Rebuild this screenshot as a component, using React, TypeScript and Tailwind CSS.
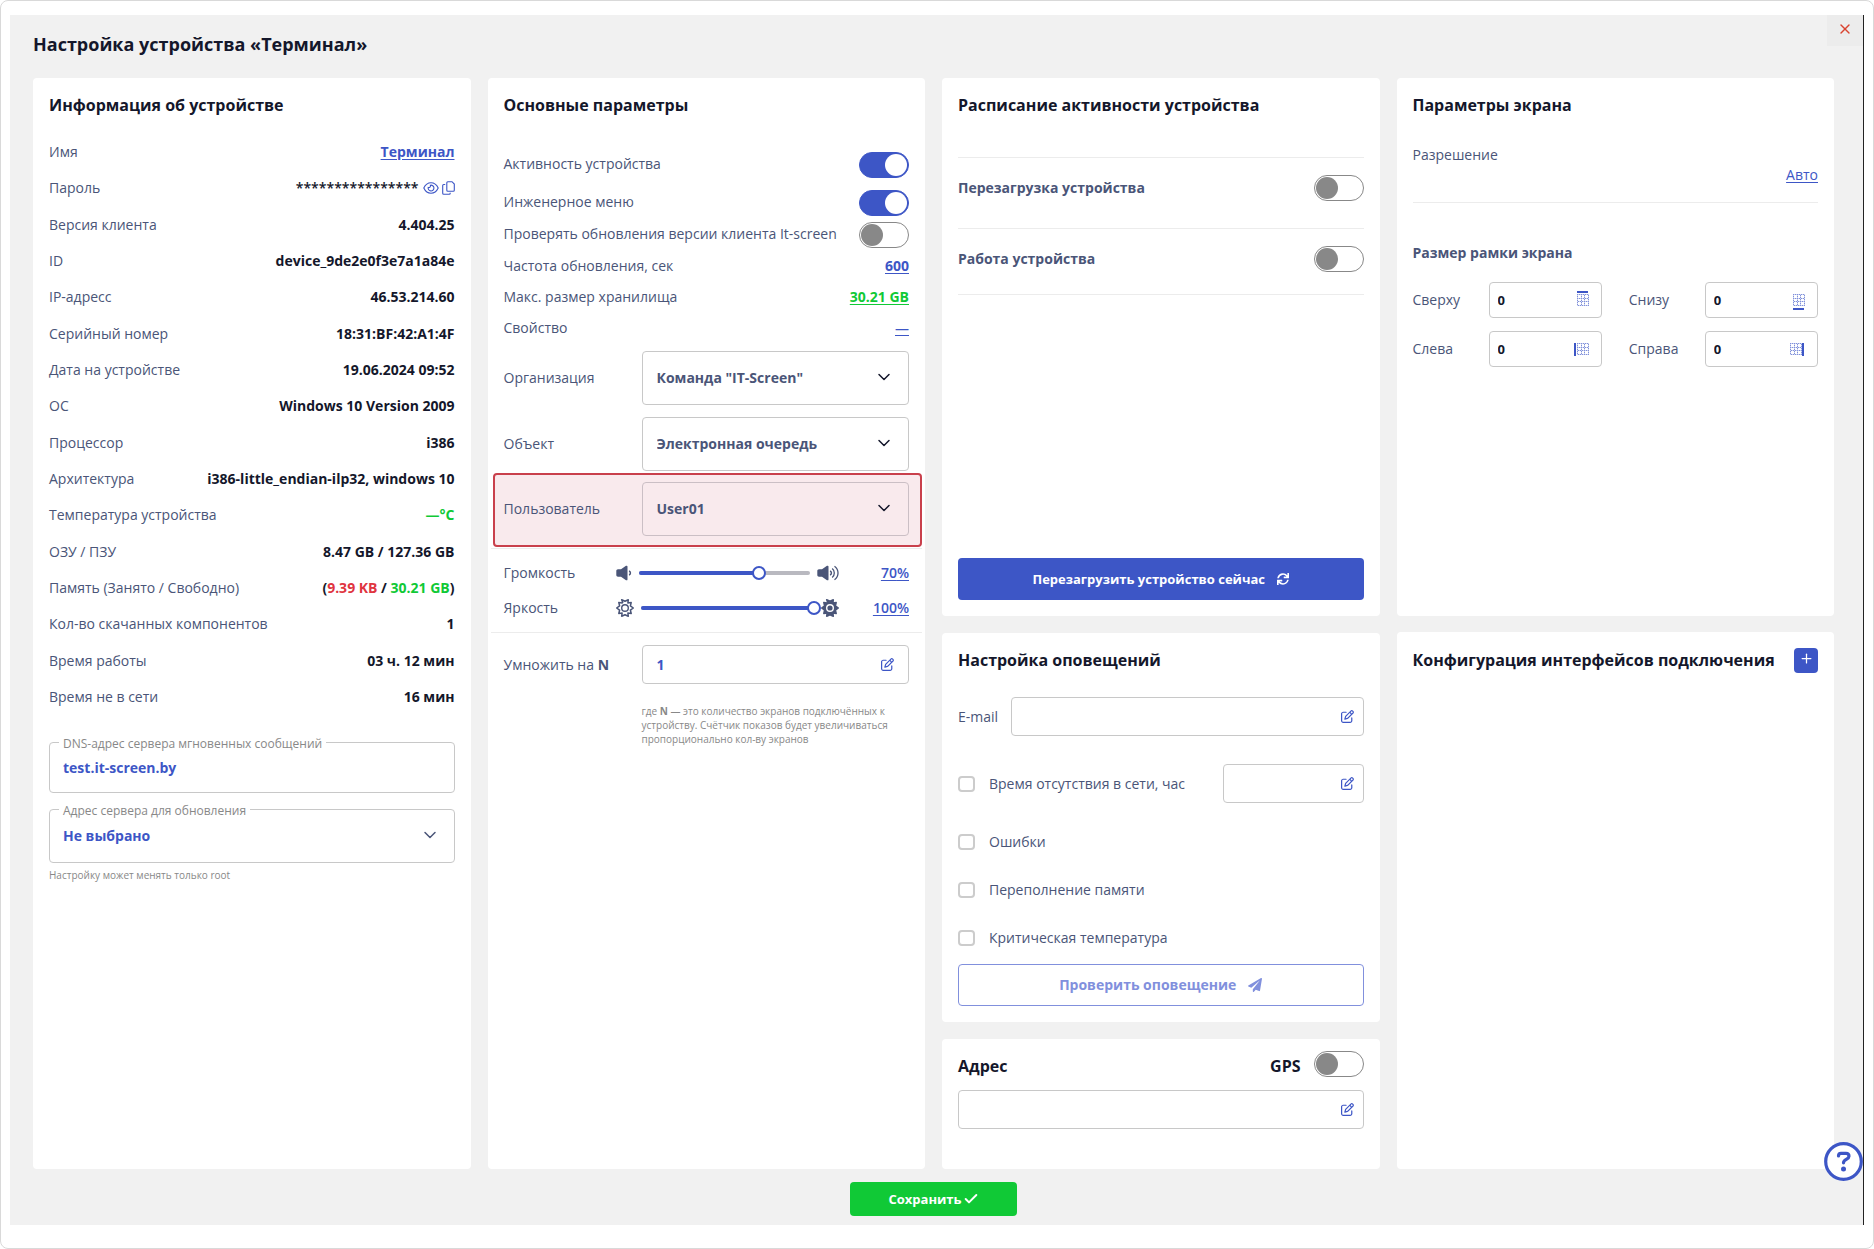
import { useState } from 'react';
import type { ReactNode } from 'react';
import { FaSync, FaPaperPlane } from 'react-icons/fa';
import { FaRegPenToSquare } from 'react-icons/fa6';
import { Check, ChevronDown, Plus, X } from 'lucide-react';

interface InfoRow {
  label: string;
  value: ReactNode;
}

const link = 'text-[#3d56c6] underline underline-offset-2';

function EyeIcon() {
  return (
    <svg width="16" height="14" viewBox="0 0 16 14" fill="none" stroke="currentColor" strokeWidth="1.1">
      <path d="M.8 7C2.3 3.8 4.9 1.8 8 1.8S13.700 3.800 15.200 7C13.700 10.200 11.100 12.200 8 12.200S2.300 10.200.8 7Z" />
      <path d="M7.400 4.200A2.900 2.900 0 1 1 5.200 6.400C6.600 6.900 7.900 5.700 7.400 4.200Z" />
    </svg>
  );
}

function CopyIcon() {
  return (
    <svg width="13" height="14" viewBox="0 0 13 14" fill="none" stroke="currentColor" strokeWidth="1.1">
      <path d="M5.800.7H10L12.300 3V9.200A1 1 0 0 1 11.300 10.200H5.800A1 1 0 0 1 4.800 9.200V1.700A1 1 0 0 1 5.800.7Z" />
      <path d="M3.200 3.500H1.700A1 1 0 0 0 .7 4.500V12.200A1 1 0 0 0 1.700 13.200H7.200A1 1 0 0 0 8.200 12.200V11.800" />
    </svg>
  );
}

function VolumeIcon({ loud }: { loud?: boolean }) {
  return (
    <svg width={loud ? 22 : 16} height="16" viewBox={loud ? '0 0 22 16' : '0 0 16 16'} fill="none" stroke="#4a5578">
      <path d="M2 4.300H5L10 .8C10.800.4 11.500.7 11.500 1.600V14.400C11.500 15.300 10.800 15.600 10 15.200L5 11.700H2C1 11.700.3 11 .3 10V6C.3 5 1 4.300 2 4.300Z" fill="#4a5578" stroke="none" />
      <path d="M13 6C14.900 6.400 14.900 9.600 13 10" strokeWidth="1.500" />
      {loud && (
        <>
          <path d="M15.200 3.500C18 5.700 18 10.300 15.200 12.500" strokeWidth="1.300" />
          <path d="M17.500 1.200C22.200 4.800 22.200 11.200 17.500 14.800" strokeWidth="1.300" />
        </>
      )}
    </svg>
  );
}

function BrightnessIcon({ filled }: { filled?: boolean }) {
  return (
    <svg width="18" height="18" viewBox="0 0 18 18" stroke="#4a5578" strokeLinejoin="round">
      <path
        d="M6.700 3.400 5.700.8 9 2.300 12.300.8 11.900 3.900 15.200 3.600 14.400 6.800 17.300 9 14.400 11.200 15.200 14.400 11.900 14.100 12.300 17.200 9 15.700 5.700 17.200 6.100 14.100 2.800 14.400 3.600 11.200.7 9 3.600 6.800 2.800 3.600 6.100 3.900Z"
        fill={filled ? '#4a5578' : 'none'}
        strokeWidth="1.500"
      />
      <circle cx="9" cy="9" r="3.300" fill={filled ? '#4a5578' : 'none'} stroke={filled ? '#fff' : '#4a5578'} strokeWidth="1.400" />
    </svg>
  );
}

// dotted grid, three cells in each direction
const dots = [0, 1, 2, 3, 4, 5, 6, 7, 8, 9, 10, 11];
const lines = [0, 4, 7, 11];

function FrameIcon({ side }: { side: 'top' | 'bottom' | 'left' | 'right' }) {
  const left = side === 'right' ? 0 : 3;

  return (
    <svg width="18" height="20" viewBox="0 0 18 20" fill="#3d56c6" shapeRendering="crispEdges">
      {dots.map((a) =>
        dots.map((b) => {
          if (!lines.includes(a) && !lines.includes(b)) return null;
          return (
            <rect key={`${a}-${b}`} x={left + a} y={4 + b} width="1" height="1" opacity={(a + b) % 2 === 0 ? 0.65 : 0.25} />
          );
        })
      )}
      {side === 'top' && <rect x="3" y="1" width="11" height="2" />}
      {side === 'bottom' && <rect x="3" y="18" width="11" height="2" />}
      {side === 'left' && <rect x="0" y="4" width="2" height="13" />}
      {side === 'right' && <rect x="12" y="4" width="2" height="13" />}
    </svg>
  );
}

function Card({ className = '', children }: { className?: string; children: ReactNode }) {
  return <section className={`flex flex-col rounded bg-white p-4 ${className}`}>{children}</section>;
}

function Title({ children }: { children: ReactNode }) {
  return <h2 className="text-base leading-[22px] font-bold text-[#14172b]">{children}</h2>;
}

function Toggle({ id, label, on = false }: { id?: string; label?: string; on?: boolean }) {
  return (
    <input
      id={id}
      type="checkbox"
      role="switch"
      aria-label={label}
      defaultChecked={on}
      className="flex h-[26px] w-[50px] shrink-0 appearance-none items-center rounded-full border border-[#888] px-px before:size-[22px] before:rounded-full before:bg-[#888] checked:justify-end checked:border-[#3d56c6] checked:bg-[#3d56c6] checked:before:bg-white"
    />
  );
}

function EditField({ id, label, value = '', className = 'flex-1 pr-[9px]' }: { id: string; label?: string; value?: string; className?: string }) {
  return (
    <div className={`flex h-[39px] items-center rounded border border-[#c8c8c8] ${className}`}>
      <input
        id={id}
        aria-label={label}
        defaultValue={value}
        className="h-full w-full min-w-0 bg-transparent pl-[14px] font-bold text-[#3d56c6] outline-none"
      />
      <button aria-label="Редактировать" className="shrink-0 text-[#3d56c6]">
        <FaRegPenToSquare size={13} />
      </button>
    </div>
  );
}

function SelectRow({ id, label, value, border = 'border-[#c8c8c8]' }: { id: string; label: string; value: string; border?: string }) {
  return (
    <div className="flex items-center">
      <label htmlFor={id} className="w-[138px] shrink-0">{label}</label>
      <div className="relative flex-1">
        <select id={id} className={`h-[54px] w-full appearance-none rounded border bg-transparent px-[14px] font-bold ${border}`}>
          <option>{value}</option>
        </select>
        <ChevronDown size={20} strokeWidth={1.8} className="pointer-events-none absolute top-4 right-[15px] text-[#14172b]" />
      </div>
    </div>
  );
}

function Slider({ id, label, initial, low, high }: { id: string; label: string; initial: number; low: ReactNode; high: ReactNode }) {
  const [value, setValue] = useState(initial);

  return (
    <div className="flex h-[35px] items-center">
      <label htmlFor={id} className="w-28 shrink-0">{label}</label>
      {low}
      <div className="relative mx-[7px] h-1 flex-1 rounded-full bg-[#b9b9c0]">
        <div className="h-1 rounded-full bg-[#3d56c6]" style={{ width: `${value}%` }} />
        <input
          id={id}
          type="range"
          value={value}
          onChange={(e) => setValue(Number(e.target.value))}
          className="absolute -inset-x-[7px] -top-[5px] h-[14px] appearance-none bg-transparent [&::-webkit-slider-thumb]:size-[14px] [&::-webkit-slider-thumb]:appearance-none [&::-webkit-slider-thumb]:rounded-full [&::-webkit-slider-thumb]:border-2 [&::-webkit-slider-thumb]:border-[#3d56c6] [&::-webkit-slider-thumb]:bg-white"
        />
      </div>
      {high}
      <a href="#" className={`w-[70px] text-right font-semibold ${link}`}>{value}%</a>
    </div>
  );
}

const info: InfoRow[] = [
  { label: 'Имя', value: <a href="#" className={link}>Терминал</a> },
  {
    label: 'Пароль',
    value: (
      <span className="flex items-center font-semibold">
        ****************
        <button aria-label="Показать пароль" className="ml-1 text-[#3d56c6]"><EyeIcon /></button>
        <button aria-label="Скопировать пароль" className="ml-[3px] text-[#3d56c6]"><CopyIcon /></button>
      </span>
    ),
  },
  { label: 'Версия клиента', value: '4.404.25' },
  { label: 'ID', value: 'device_9de2e0f3e7a1a84e' },
  { label: 'IP-адресс', value: '46.53.214.60' },
  { label: 'Серийный номер', value: '18:31:BF:42:A1:4F' },
  { label: 'Дата на устройстве', value: '19.06.2024 09:52' },
  { label: 'ОС', value: 'Windows 10 Version 2009' },
  { label: 'Процессор', value: 'i386' },
  { label: 'Архитектура', value: 'i386-little_endian-ilp32, windows 10' },
  { label: 'Температура устройства', value: <span className="text-[#10c936]">—°C</span> },
  { label: 'ОЗУ / ПЗУ', value: '8.47 GB / 127.36 GB' },
  {
    label: 'Память (Занято / Свободно)',
    value: (
      <>
        (<span className="text-[#e0353f]">9.39 KB</span> / <span className="text-[#10c936]">30.21 GB</span>)
      </>
    ),
  },
  { label: 'Кол-во скачанных компонентов', value: '1' },
  { label: 'Время работы', value: '03 ч. 12 мин' },
  { label: 'Время не в сети', value: '16 мин' },
];

const frame = [
  { id: 'top', label: 'Сверху', side: 'top' as const },
  { id: 'bottom', label: 'Снизу', side: 'bottom' as const },
  { id: 'left', label: 'Слева', side: 'left' as const },
  { id: 'right', label: 'Справа', side: 'right' as const },
];

export default function App() {
  return (
    <div className="flex min-h-screen flex-col rounded-lg border border-[#d9d9d9] bg-white pt-[14px] pr-[9px] pb-[23px] pl-[9px] font-['Open_Sans',sans-serif] text-sm text-[#4a5578]">
      <div className="relative flex flex-1 flex-col border-r border-[#222] bg-[#f1f1f1] pr-[29px] pl-[23px]">
        <h1 className="mt-[17px] mb-[22px] text-lg leading-6 font-bold text-[#14172b]">Настройка устройства «Терминал»</h1>
        <button aria-label="Закрыть" className="absolute top-0 right-0 flex h-[31px] w-9 items-center justify-center bg-[#ececec] pb-1 text-[#d9432f]">
          <X size={16} strokeWidth={2} />
        </button>

        <main className="grid flex-1 grid-cols-4 gap-[17px]">
          {/* Информация */}
          <Card>
            <Title>Информация об устройстве</Title>
            <dl className="mt-[18px] grid h-[581px] auto-rows-fr">
              {info.map((row) => (
                <div key={row.label} className="flex items-center justify-between">
                  <dt>{row.label}</dt>
                  <dd className="font-bold text-[#14172b]">{row.value}</dd>
                </div>
              ))}
            </dl>
            <div className="relative mt-[27px]">
              <label htmlFor="dns" className="absolute -top-2 left-[10px] bg-white px-1 text-xs leading-5 text-[#888]">
                DNS-адрес сервера мгновенных сообщений
              </label>
              <input id="dns" defaultValue="test.it-screen.by" className="h-[51px] w-full rounded border border-[#c8c8c8] px-[13px] font-bold text-[#3d56c6]" />
            </div>
            <div className="relative mt-4">
              <label htmlFor="update" className="absolute -top-2 left-[10px] z-10 bg-white px-1 text-xs leading-5 text-[#888]">
                Адрес сервера для обновления
              </label>
              <select id="update" className="h-[54px] w-full appearance-none rounded border border-[#c8c8c8] px-[13px] font-bold text-[#3d56c6]">
                <option>Не выбрано</option>
              </select>
              <ChevronDown size={20} strokeWidth={1.8} className="pointer-events-none absolute top-4 right-[15px]" />
            </div>
            <p className="mt-1 text-[10px] leading-4 text-[#888]">Настройку может менять только root</p>
          </Card>

          {/* Основные параметры */}
          <Card>
            <Title>Основные параметры</Title>
            <div className="mt-9 flex items-start justify-between">
              <label htmlFor="active" className="leading-6">Активность устройства</label>
              <Toggle id="active" on />
            </div>
            <div className="mt-3 flex items-start justify-between">
              <label htmlFor="engineer" className="leading-6">Инженерное меню</label>
              <Toggle id="engineer" on />
            </div>
            <div className="mt-[6px] mb-[2px] flex items-start justify-between">
              <label htmlFor="check" className="leading-6">Проверять обновления версии клиента It-screen</label>
              <Toggle id="check" />
            </div>
            <div className="flex h-[31px] items-center justify-between">
              <span>Частота обновления, сек</span>
              <a href="#" className={`font-bold ${link}`}>600</a>
            </div>
            <div className="flex h-[31px] items-center justify-between">
              <span>Макс. размер хранилища</span>
              <a href="#" className="font-bold text-[#10c936] underline underline-offset-2">30.21 GB</a>
            </div>
            <div className="flex h-[31px] items-center justify-between">
              <span>Свойство</span>
              <a href="#" className={`font-semibold ${link}`}>—</a>
            </div>
            <div className="mt-2 flex flex-col gap-3">
              <SelectRow id="org" label="Организация" value={'Команда "IT-Screen"'} />
              <SelectRow id="object" label="Объект" value="Электронная очередь" />
            </div>
            <div className="mt-[2px] -mr-[13px] -ml-[11px] rounded border-2 border-[#c9404c] bg-[#f9eaed] pt-[7px] pr-[11px] pb-[9px] pl-[9px]">
              <SelectRow id="user" label="Пользователь" value="User01" border="border-[#cbbfc5]" />
            </div>
            <div className="-mx-[13px] mt-px border-y border-[#ececec] px-[13px] pt-[6px] pb-[7px]">
              <Slider id="volume" label="Громкость" initial={70} low={<VolumeIcon />} high={<VolumeIcon loud />} />
              <Slider id="brightness" label="Яркость" initial={100} low={<BrightnessIcon />} high={<BrightnessIcon filled />} />
            </div>
            <div className="mt-3 flex items-center">
              <label htmlFor="multiply" className="w-[138px] shrink-0">Умножить на <b>N</b></label>
              <EditField id="multiply" value="1" className="flex-1 pr-[14px]" />
            </div>
            <p className="mt-5 pl-[138px] text-[10px] leading-[14px] text-[#888]">
              где <b>N</b> — это количество экранов подключённых к устройству. Счётчик показов будет увеличиваться пропорционально кол-ву экранов
            </p>
          </Card>

          <div className="flex flex-col gap-[17px]">
            {/* Расписание */}
            <Card className="flex-1">
              <Title>Расписание активности устройства</Title>
              <div className="mt-[41px] flex h-[71px] items-start justify-between border-t border-[#ececec] pt-[17px]">
                <label htmlFor="reboot" className="leading-[26px] font-bold">Перезагрузка устройства</label>
                <Toggle id="reboot" />
              </div>
              <div className="flex h-[67px] items-start justify-between border-y border-[#ececec] pt-[17px]">
                <label htmlFor="work" className="leading-[26px] font-bold">Работа устройства</label>
                <Toggle id="work" />
              </div>
              <button className="mt-auto flex h-[42px] items-center justify-center gap-3 rounded bg-[#3d56c6] text-[13px] font-bold text-white">
                Перезагрузить устройство сейчас
                <FaSync size={12} />
              </button>
            </Card>

            {/* Оповещения */}
            <Card>
              <Title>Настройка оповещений</Title>
              <div className="mt-[26px] flex items-center">
                <label htmlFor="email" className="w-[53px] shrink-0">E-mail</label>
                <EditField id="email" />
              </div>
              <div className="mt-7 flex items-center">
                <input id="offline" type="checkbox" className="h-4 w-[17px] appearance-none rounded-sm border-2 border-[#ccc] checked:bg-[#3d56c6]" />
                <label htmlFor="offline" className="ml-[14px]">Время отсутствия в сети, час</label>
                <EditField id="hours" label="Часов" className="ml-auto w-[141px] pr-[9px]" />
              </div>
              <div className="mt-[15px] flex flex-col">
                {['Ошибки', 'Переполнение памяти', 'Критическая температура'].map((name) => (
                  <label key={name} className="flex h-12 items-center">
                    <input type="checkbox" className="mr-[14px] h-4 w-[17px] appearance-none rounded-sm border-2 border-[#ccc] checked:bg-[#3d56c6]" />
                    {name}
                  </label>
                ))}
              </div>
              <button className="mt-[2px] flex h-[42px] items-center justify-center gap-3 rounded border border-[#8190dd] font-bold text-[#8190dd]">
                Проверить оповещение
                <FaPaperPlane size={14} />
              </button>
            </Card>

            {/* Адрес */}
            <Card className="h-[130px]">
              <div className="-mt-1 flex items-end">
                <Title>Адрес</Title>
                <label htmlFor="gps" className="mr-[13px] ml-auto text-base leading-[22px] font-bold text-[#14172b]">GPS</label>
                <Toggle id="gps" />
              </div>
              <EditField id="address" label="Адрес" className="mt-[13px] pr-[9px]" />
            </Card>
          </div>

          <div className="flex flex-col gap-4">
            {/* Экран */}
            <Card className="flex-1">
              <Title>Параметры экрана</Title>
              <div className="mt-[29px]">Разрешение</div>
              <div className="flex justify-end border-b border-[#ececec] pb-[17px]">
                <a href="#" className={link}>Авто</a>
              </div>
              <h3 className="mt-10 leading-5 font-bold">Размер рамки экрана</h3>
              <div className="mt-[19px] grid grid-cols-2 gap-x-[27px] gap-y-[13px]">
                {frame.map((f) => (
                  <div key={f.id} className="flex items-center">
                    <label htmlFor={f.id} className="w-[76px] shrink-0">{f.label}</label>
                    <div className="flex h-9 min-w-0 flex-1 items-center rounded border border-[#c8c8c8] pr-[9px]">
                      <input id={f.id} defaultValue="0" className="w-full min-w-0 pl-2 text-[13px] font-bold text-[#14172b] outline-none" />
                      <span className="shrink-0"><FrameIcon side={f.side} /></span>
                    </div>
                  </div>
                ))}
              </div>
            </Card>

            {/* Интерфейсы */}
            <Card className="flex-1">
              <div className="flex items-center justify-between">
                <Title>Конфигурация интерфейсов подключения</Title>
                <button aria-label="Добавить" className="flex h-[25px] w-6 shrink-0 items-center justify-center rounded bg-[#3d56c6] pb-1 text-white">
                  <Plus size={15} strokeWidth={2} />
                </button>
              </div>
            </Card>
          </div>
        </main>

        <button className="mt-[13px] mb-[9px] flex h-[34px] w-[167px] items-center justify-center gap-px self-center rounded bg-[#10c936] text-[13px] font-bold text-white">
          Сохранить
          <Check size={16} strokeWidth={3} />
        </button>

        <button aria-label="Помощь" className="absolute right-0 bottom-11 size-[39px] rounded-full bg-white text-[#3d56c6]">
          <svg viewBox="0 0 39 39" fill="none" stroke="currentColor" strokeLinecap="round" strokeLinejoin="round">
            <circle cx="19.500" cy="19.500" r="17.800" strokeWidth="3.200" />
            <path d="M14.500 14C14.500 12 15.500 11.300 17 11.300H22C24 11.300 25 12.600 25 14.200C25 17.500 19.500 17.300 19.500 20.800" strokeWidth="3.200" />
            <circle cx="19.500" cy="27" r="2.500" fill="currentColor" stroke="none" />
          </svg>
        </button>
      </div>
    </div>
  );
}
